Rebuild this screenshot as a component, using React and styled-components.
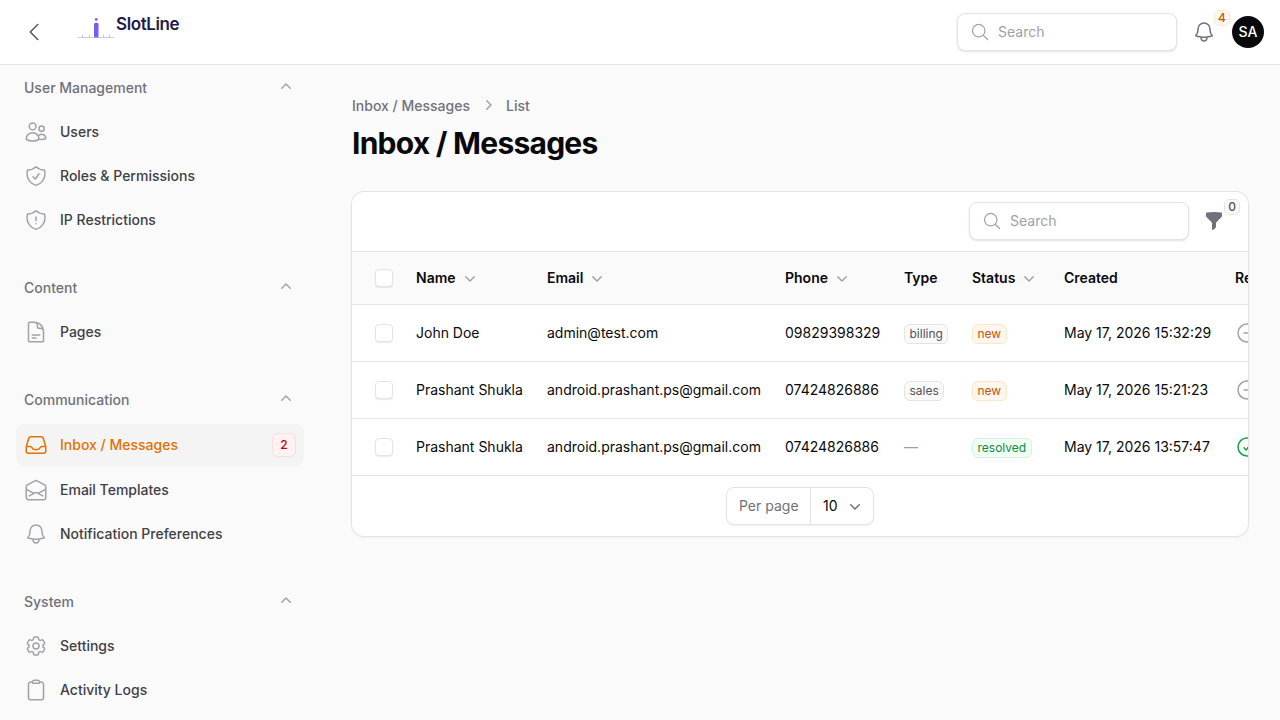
import React from 'react'
import styled, { createGlobalStyle } from 'styled-components'
import {
  HiOutlineUsers,
  HiOutlineShieldCheck,
  HiOutlineShieldExclamation,
  HiOutlineDocumentText,
  HiOutlineInbox,
  HiOutlineEnvelopeOpen,
  HiOutlineBell,
  HiOutlineCog6Tooth,
  HiOutlineClipboard,
  HiOutlineMagnifyingGlass,
  HiOutlineChevronLeft,
  HiOutlineMinusCircle,
  HiOutlineCheckCircle,
  HiMiniFunnel,
  HiMiniChevronUp,
  HiMiniChevronDown,
  HiMiniChevronRight,
} from 'react-icons/hi2'

const GlobalStyle = createGlobalStyle`
  html, body {
    margin: 0;
    height: 100%;
    overflow: hidden;
    background: #fafafa;
    font-family: Inter, "Liberation Sans", sans-serif;
    color: #09090b;
  }
  * { box-sizing: border-box; }
`

const Page = styled.div`
  display: flex;
  flex-direction: column;
  width: 1280px;
  height: 720px;
  overflow: hidden;
`

const Topbar = styled.header`
  display: flex;
  align-items: center;
  flex: none;
  height: 65px;
  padding: 0 16px 1px 22px;
  background: #fff;
  border-bottom: 1px solid #e4e4e7;
  position: relative;
  z-index: 1;
`

const BackIcon = styled(HiOutlineChevronLeft)`
  width: 24px;
  height: 24px;
  color: #52525b;
  flex: none;
`

const Brand = styled.div`
  display: flex;
  align-items: flex-start;
  height: 40px;
  margin-left: 32px;
  margin-top: -2px;
`

const LogoMark = styled.svg`
  flex: none;
  margin-top: 5px;
`

const BrandName = styled.span`
  font-size: 17px;
  line-height: 24px;
  font-weight: 600;
  letter-spacing: -0.4px;
  color: #1e1b4b;
  margin-top: 1px;
`

const Spacer = styled.div`
  flex: 1;
`

const SearchBox = styled.div`
  display: flex;
  align-items: center;
  gap: 8px;
  width: 220px;
  height: 38px;
  padding: 0 12px;
  background: #fff;
  border: 1px solid #e4e4e7;
  border-radius: 8px;
  box-shadow: 0 1px 2px rgba(0, 0, 0, 0.12);
  font-size: 14px;
  color: #a1a1aa;
`

const SearchIcon = styled(HiOutlineMagnifyingGlass)`
  width: 20px;
  height: 20px;
  color: #a1a1aa;
  flex: none;
`

const BellWrap = styled.div`
  position: relative;
  width: 24px;
  height: 24px;
  margin-left: 15px;
`

const BellIcon = styled(HiOutlineBell)`
  width: 24px;
  height: 24px;
  color: #71717a;
  display: block;
`

const CornerBadge = styled.span`
  position: absolute;
  top: ${({ $top }) => $top}px;
  left: ${({ $left }) => $left}px;
  display: flex;
  align-items: center;
  justify-content: center;
  width: ${({ $size }) => $size}px;
  height: ${({ $size }) => $size}px;
  border-radius: 5px;
  font-size: 12px;
  font-weight: 500;
  color: ${({ $color }) => $color};
  background: ${({ $bg }) => $bg};
  border: 1px solid ${({ $line }) => $line};
`

const Avatar = styled.div`
  display: flex;
  align-items: center;
  justify-content: center;
  width: 32px;
  height: 32px;
  margin-left: 16px;
  border-radius: 50%;
  background: #09090b;
  color: #fff;
  font-size: 14px;
  font-weight: 500;
`

const Body = styled.div`
  display: flex;
  flex: 1;
  min-height: 0;
`

const Sidebar = styled.aside`
  display: flex;
  flex-direction: column;
  gap: 36px;
  flex: none;
  width: 320px;
  padding: 11px 16px 0;
  overflow: hidden;
`

const Group = styled.section`
  display: flex;
  flex-direction: column;
  gap: 12px;
`

const GroupHead = styled.div`
  display: flex;
  align-items: center;
  justify-content: space-between;
  height: 24px;
  padding: 0 8px 2px;
  font-size: 14px;
  font-weight: 500;
  color: #71717a;
  svg {
    width: 20px;
    height: 20px;
    color: #a1a1aa;
  }
`

const Items = styled.div`
  display: flex;
  flex-direction: column;
  gap: 4px;
`

const Item = styled.div`
  display: flex;
  align-items: center;
  gap: 12px;
  min-height: ${({ $active }) => ($active ? 42 : 40)}px;
  padding: 8px;
  border-radius: 8px;
  font-size: 14px;
  line-height: 20px;
  font-weight: 500;
  color: ${({ $active }) => ($active ? '#e17100' : '#3f3f46')};
  background: ${({ $active }) => ($active ? '#f4f4f5' : 'transparent')};
  svg {
    width: 24px;
    height: 24px;
    flex: none;
    color: ${({ $active }) => ($active ? '#e17100' : '#a1a1aa')};
  }
`

const ItemLabel = styled.span`
  flex: 1;
`

const CountBadge = styled.span`
  display: flex;
  align-items: center;
  justify-content: center;
  width: 24px;
  height: 24px;
  border-radius: 6px;
  font-size: 12px;
  font-weight: 500;
  color: #c10007;
  background: #fef2f2;
  border: 1px solid #fcdcdc;
`

const Main = styled.main`
  flex: 1;
  min-width: 0;
  padding: 30px 32px 0;
`

const Breadcrumbs = styled.nav`
  display: flex;
  align-items: center;
  gap: 8px;
  height: 20px;
  font-size: 14px;
  font-weight: 500;
  color: #71717a;
  svg {
    width: 20px;
    height: 20px;
    color: #a1a1aa;
  }
`

const Title = styled.h1`
  margin: 10px 0 31px;
  font-size: 30px;
  line-height: 36px;
  font-weight: 700;
  letter-spacing: -0.75px;
  color: #09090b;
`

const Card = styled.div`
  background: #fff;
  border-radius: 12px;
  box-shadow: 0 0 0 1px #e4e4e7, 0 1px 3px rgba(0, 0, 0, 0.08);
  overflow: hidden;
`

const Toolbar = styled.div`
  display: flex;
  align-items: center;
  justify-content: flex-end;
  height: 60px;
  padding: 0 24px 2px 0;
  border-bottom: 1px solid #e4e4e7;
`

const FilterWrap = styled.div`
  position: relative;
  width: 20px;
  height: 20px;
  margin-left: 15px;
`

const FilterIcon = styled(HiMiniFunnel)`
  width: 20px;
  height: 20px;
  color: #71717a;
  display: block;
`

const Table = styled.table`
  width: 1001px;
  table-layout: fixed;
  border-collapse: separate;
  border-spacing: 0;
  font-size: 14px;
`

const Col = styled.col`
  width: ${({ $w }) => $w}px;
`

const Th = styled.th`
  height: 53px;
  padding: 0 12px 1px;
  text-align: left;
  font-weight: 600;
  color: #09090b;
  background: #fafafa;
  border-bottom: 1px solid #e4e4e7;
  white-space: nowrap;
`

const ThInner = styled.span`
  display: flex;
  align-items: center;
  gap: 4px;
  svg {
    width: 20px;
    height: 20px;
    color: #a1a1aa;
  }
`

const Td = styled.td`
  height: 57px;
  padding: 0 12px 1px;
  color: #09090b;
  border-bottom: 1px solid #e4e4e7;
  white-space: nowrap;
  overflow: hidden;
`

const CheckCell = styled.div`
  display: flex;
  padding-left: 11px;
`

const Check = styled.span`
  display: block;
  flex: none;
  width: 18px;
  height: 18px;
  background: #fff;
  border: 1px solid #e4e4e7;
  border-radius: 4px;
  box-shadow: 0 1px 1px rgba(0, 0, 0, 0.08);
`

const tagColors = {
  gray: ['#52525b', '#fafafa', '#e4e4e7'],
  orange: ['#ca5010', '#fff7ed', '#fde7c7'],
  green: ['#108a3e', '#f0fdf4', '#d3f4de'],
}

const Tag = styled.span`
  display: inline-block;
  padding: 0 4.5px;
  height: 20px;
  line-height: 18px;
  vertical-align: -2px;
  border-radius: 6px;
  font-size: 12px;
  font-weight: 400;
  color: ${({ $tone }) => tagColors[$tone][0]};
  background: ${({ $tone }) => tagColors[$tone][1]};
  border: 1px solid ${({ $tone }) => tagColors[$tone][2]};
`

const Dash = styled.span`
  color: #9f9fa9;
`

const StateIcon = styled.span`
  display: flex;
  svg {
    width: 24px;
    height: 24px;
    color: ${({ $ok }) => ($ok ? '#16a34a' : '#a1a1aa')};
  }
`

const Footer = styled.div`
  display: flex;
  align-items: center;
  justify-content: center;
  height: 60px;
`

const PerPage = styled.div`
  display: flex;
  align-items: stretch;
  width: 148px;
  height: 38px;
  border: 1px solid #e4e4e7;
  border-radius: 8px;
  box-shadow: 0 1px 2px rgba(0, 0, 0, 0.08);
  font-size: 14px;
`

const PerPageLabel = styled.span`
  display: flex;
  align-items: center;
  flex: none;
  width: 84px;
  padding: 0 0 1px 12px;
  color: #71717a;
  border-right: 1px solid #e4e4e7;
`

const PerPageValue = styled.span`
  display: flex;
  align-items: center;
  justify-content: space-between;
  flex: 1;
  padding: 0 8px 1px 12px;
  color: #09090b;
  svg {
    width: 20px;
    height: 20px;
    color: #6b7280;
  }
`

const Logo = () => (
  <LogoMark width="38" height="24" viewBox="0 0 38 24">
    <g stroke="#c7c5e8" strokeWidth="1">
      <line x1="0" y1="21.5" x2="36" y2="21.5" />
      <line x1="4.5" y1="18.5" x2="4.5" y2="21" />
      <line x1="11.5" y1="18.5" x2="11.5" y2="21" />
      <line x1="25.5" y1="18.5" x2="25.5" y2="21" />
      <line x1="31.5" y1="18.5" x2="31.5" y2="21" />
    </g>
    <rect x="16" y="6.7" width="4.5" height="14.8" rx="1.5" fill="#7c5cf0" />
    <circle cx="18.2" cy="3.4" r="1.4" fill="#7c5cf0" />
  </LogoMark>
)

const nav = [
  {
    title: 'User Management',
    items: [
      { label: 'Users', icon: HiOutlineUsers },
      { label: 'Roles & Permissions', icon: HiOutlineShieldCheck },
      { label: 'IP Restrictions', icon: HiOutlineShieldExclamation },
    ],
  },
  { title: 'Content', items: [{ label: 'Pages', icon: HiOutlineDocumentText }] },
  {
    title: 'Communication',
    items: [
      { label: 'Inbox / Messages', icon: HiOutlineInbox, active: true, count: 2 },
      { label: 'Email Templates', icon: HiOutlineEnvelopeOpen },
      { label: 'Notification Preferences', icon: HiOutlineBell },
    ],
  },
  {
    title: 'System',
    items: [
      { label: 'Settings', icon: HiOutlineCog6Tooth },
      { label: 'Activity Logs', icon: HiOutlineClipboard },
    ],
  },
]

const rows = [
  { name: 'John Doe', email: 'admin@test.com', phone: '09829398329', type: 'billing', status: 'new', created: 'May 17, 2026 15:32:29' },
  { name: 'Prashant Shukla', email: 'android.prashant.ps@gmail.com', phone: '07424826886', type: 'sales', status: 'new', created: 'May 17, 2026 15:21:23' },
  { name: 'Prashant Shukla', email: 'android.prashant.ps@gmail.com', phone: '07424826886', type: null, status: 'resolved', created: 'May 17, 2026 13:57:47', done: true },
]

const columns = [
  { label: 'Name', sortable: true },
  { label: 'Email', sortable: true },
  { label: 'Phone', sortable: true },
  { label: 'Type' },
  { label: 'Status', sortable: true },
  { label: 'Created' },
  { label: 'Replied' },
]

const App = () => (
  <Page>
    <GlobalStyle />
    <Topbar>
      <BackIcon />
      <Brand>
        <Logo />
        <BrandName>SlotLine</BrandName>
      </Brand>
      <Spacer />
      <SearchBox>
        <SearchIcon />
        Search
      </SearchBox>
      <BellWrap>
        <BellIcon />
        <CornerBadge $top={-10} $left={22} $size={16} $color="#c2570c" $bg="#fff7ed" $line="#fdebd0">4</CornerBadge>
      </BellWrap>
      <Avatar>SA</Avatar>
    </Topbar>
    <Body>
      <Sidebar>
        {nav.map((group) => (
          <Group key={group.title}>
            <GroupHead>
              {group.title}
              <HiMiniChevronUp />
            </GroupHead>
            <Items>
              {group.items.map(({ label, icon: Icon, active, count }) => (
                <Item key={label} $active={active}>
                  <Icon />
                  <ItemLabel>{label}</ItemLabel>
                  {count && <CountBadge>{count}</CountBadge>}
                </Item>
              ))}
            </Items>
          </Group>
        ))}
      </Sidebar>
      <Main>
        <Breadcrumbs>
          Inbox / Messages
          <HiMiniChevronRight />
          List
        </Breadcrumbs>
        <Title>Inbox / Messages</Title>
        <Card>
          <Toolbar>
            <SearchBox>
              <SearchIcon />
              Search
            </SearchBox>
            <FilterWrap>
              <FilterIcon />
              <CornerBadge $top={-12} $left={20} $size={16} $color="#52525b" $bg="#fafafa" $line="#e4e4e7">0</CornerBadge>
            </FilterWrap>
          </Toolbar>
          <Table>
            <colgroup>
              <Col $w={52} />
              <Col $w={131} />
              <Col $w={238} />
              <Col $w={119} />
              <Col $w={68} />
              <Col $w={92} />
              <Col $w={171} />
              <Col $w={130} />
            </colgroup>
            <thead>
              <tr>
                <Th>
                  <CheckCell><Check /></CheckCell>
                </Th>
                {columns.map((col) => (
                  <Th key={col.label}>
                    <ThInner>
                      {col.label}
                      {col.sortable && <HiMiniChevronDown />}
                    </ThInner>
                  </Th>
                ))}
              </tr>
            </thead>
            <tbody>
              {rows.map((row) => (
                <tr key={row.created}>
                  <Td>
                    <CheckCell><Check /></CheckCell>
                  </Td>
                  <Td>{row.name}</Td>
                  <Td>{row.email}</Td>
                  <Td>{row.phone}</Td>
                  <Td>{row.type ? <Tag $tone="gray">{row.type}</Tag> : <Dash>—</Dash>}</Td>
                  <Td><Tag $tone={row.done ? 'green' : 'orange'}>{row.status}</Tag></Td>
                  <Td>{row.created}</Td>
                  <Td>
                    <StateIcon $ok={row.done}>
                      {row.done ? <HiOutlineCheckCircle /> : <HiOutlineMinusCircle />}
                    </StateIcon>
                  </Td>
                </tr>
              ))}
            </tbody>
          </Table>
          <Footer>
            <PerPage>
              <PerPageLabel>Per page</PerPageLabel>
              <PerPageValue>
                10
                <HiMiniChevronDown />
              </PerPageValue>
            </PerPage>
          </Footer>
        </Card>
      </Main>
    </Body>
  </Page>
)

export default App
